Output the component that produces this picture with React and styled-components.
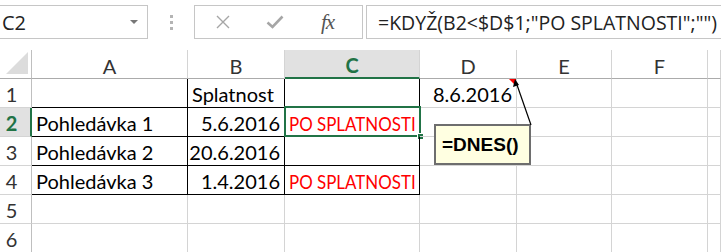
import React from "react";
import styled, { createGlobalStyle } from "styled-components";

const Global = createGlobalStyle`
  html, body { margin: 0; padding: 0; background: #fff; }
  * { box-sizing: border-box; }
`;

const GREEN = "#217346";
const GRID = "#d4d4d4";
const CELL_FONT = `"Lato", "Liberation Sans", sans-serif`;
const UI_FONT = `"Open Sans", "Noto Sans", sans-serif`;

const Page = styled.div`
  position: relative;
  width: 721px;
  height: 252px;
  overflow: hidden;
  background: #fff;
`;

const FormulaBar = styled.div`
  display: flex;
  align-items: stretch;
  height: 34px;
  margin-top: 5px;
`;

const NameBox = styled.div`
  width: 148px;
  border: 1px solid #c6c6c6;
  border-left: none;
  display: flex;
  align-items: center;
  justify-content: space-between;
  padding: 0 9px 0 2px;
  font-family: ${UI_FONT};
  font-size: 20px;
  color: #222;
`;

const DropArrow = styled.span`
  width: 0;
  height: 0;
  border-left: 4px solid transparent;
  border-right: 4px solid transparent;
  border-top: 4px solid #777;
`;

const Dots = styled.div`
  width: 46px;
  display: flex;
  flex-direction: column;
  align-items: center;
  justify-content: center;
  gap: 3px;
  span {
    width: 3px;
    height: 3px;
    background: #b4b4b4;
  }
`;

const IconBox = styled.div`
  width: 169px;
  border: 1px solid #c6c6c6;
  display: flex;
  align-items: center;
  padding-left: 20px;
  gap: 35px;
`;

const Fx = styled.span`
  margin-left: 2px;
  font-family: "Liberation Serif", serif;
  font-style: italic;
  font-size: 21px;
  color: #555;
  letter-spacing: -1px;
`;

const FormulaInput = styled.div`
  flex: 1;
  margin-left: 3px;
  border: 1px solid #c6c6c6;
  border-right: none;
  display: flex;
  align-items: center;
  padding-left: 11px;
  font-family: ${UI_FONT};
  font-size: 19.5px;
  color: #222;
  white-space: nowrap;
  overflow: hidden;
`;

const Sheet = styled.div`
  margin-top: 11px;
  display: grid;
  grid-template-columns: 32px 156px 97px 135px 97px 95px 96px 13px;
  grid-auto-rows: 29px;
`;

const Corner = styled.div`
  border-right: 1px solid #bfbfbf;
  border-bottom: 1px solid #ababab;
  display: flex;
  align-items: flex-end;
  justify-content: flex-end;
  padding: 0 3px 4px 0;
`;

const ColHeader = styled.div`
  border-right: 1px solid ${GRID};
  border-bottom: ${(p) => (p.$active ? `2px solid ${GREEN}` : "1px solid #ababab")};
  background: ${(p) => (p.$active ? "#e1e1e1" : "#fff")};
  color: ${(p) => (p.$active ? GREEN : "#333")};
  font-weight: ${(p) => (p.$active ? 700 : 400)};
  font-family: ${CELL_FONT};
  font-size: 20px;
  display: flex;
  align-items: center;
  justify-content: center;
  padding-top: 3px;
`;

const RowHeader = styled.div`
  border-right: ${(p) => (p.$active ? `2px solid ${GREEN}` : "1px solid #bfbfbf")};
  border-bottom: 1px solid ${GRID};
  background: ${(p) => (p.$active ? "#e1e1e1" : "#fff")};
  color: ${(p) => (p.$active ? GREEN : "#333")};
  font-weight: ${(p) => (p.$active ? 700 : 400)};
  font-family: ${CELL_FONT};
  font-size: 20px;
  display: flex;
  align-items: center;
  justify-content: center;
  padding: 2px ${(p) => (p.$active ? 7 : 8)}px 0 0;
`;

const Cell = styled.div`
  position: relative;
  border-right: 1px solid ${(p) => (p.$boxR ? "#000" : GRID)};
  border-bottom: 1px solid ${(p) => (p.$boxB ? "#000" : GRID)};
  display: flex;
  align-items: center;
  justify-content: ${(p) => (p.$right ? "flex-end" : "flex-start")};
  padding: 2px 4px 0 4px;
  font-family: ${CELL_FONT};
  font-size: 20px;
  color: ${(p) => (p.$red ? "#ff0000" : "#000")};
  white-space: nowrap;
`;

const Narrow = styled.span`
  display: inline-block;
  font-size: 19px;
  transform-origin: left center;
  transform: scaleX(0.89);
`;

const Selection = styled.div`
  position: absolute;
  left: -1px;
  top: -2px;
  right: -2px;
  bottom: -1px;
  border: 2px solid ${GREEN};
  pointer-events: none;
`;

const Handle = styled.div`
  position: absolute;
  right: -5px;
  bottom: -5px;
  width: 7px;
  height: 7px;
  background: ${GREEN};
  border: 1px solid #fff;
`;

const CommentMark = styled.div`
  position: absolute;
  top: 0;
  right: 0;
  width: 0;
  height: 0;
  border-top: 7px solid #ff0000;
  border-left: 7px solid transparent;
`;

const Comment = styled.div`
  position: absolute;
  left: 434px;
  top: 124px;
  width: 97px;
  height: 41px;
  background: #ffffe1;
  border: 2px solid #6e6e6e;
  display: flex;
  align-items: center;
  padding-left: 6px;
  font-family: "Liberation Sans", Arial, sans-serif;
  font-weight: 700;
  font-size: 19px;
  color: #000;
`;

const Leader = styled.svg`
  position: absolute;
  left: 505px;
  top: 76px;
  overflow: visible;
`;

const XIcon = () => (
  <svg width="16" height="16" viewBox="0 0 16 16">
    <path d="M2 2 L14 14 M14 2 L2 14" stroke="#a6a6a6" strokeWidth="1.4" fill="none" />
  </svg>
);

const CheckIcon = () => (
  <svg width="18" height="16" viewBox="0 0 18 16">
    <path d="M1.5 8.5 L6.5 13 L16.5 2.5" stroke="#a6a6a6" strokeWidth="2.6" fill="none" />
  </svg>
);

const CornerTri = () => (
  <svg width="22" height="22" viewBox="0 0 22 22">
    <polygon points="22,0 22,22 0,22" fill="#dcdcdc" />
  </svg>
);

const cols = ["A", "B", "C", "D", "E", "F", ""];

const rows = [
  [{}, { t: "Splatnost" }, {}, { t: "8.6.2016", right: true, mark: true }],
  [{ t: "Pohledávka 1" }, { t: "5.6.2016", right: true }, { t: "PO SPLATNOSTI", red: true, sel: true }],
  [{ t: "Pohledávka 2" }, { t: "20.6.2016", right: true }, {}],
  [{ t: "Pohledávka 3" }, { t: "1.4.2016", right: true }, { t: "PO SPLATNOSTI", red: true }],
  [],
  [],
];

export default function App() {
  return (
    <Page>
      <Global />
      <FormulaBar>
        <NameBox>
          C2
          <DropArrow />
        </NameBox>
        <Dots>
          <span />
          <span />
          <span />
        </Dots>
        <IconBox>
          <XIcon />
          <CheckIcon />
          <Fx>fx</Fx>
        </IconBox>
        <FormulaInput>=KDYŽ(B2&lt;$D$1;"PO SPLATNOSTI";"")</FormulaInput>
      </FormulaBar>
      <Sheet>
        <Corner>
          <CornerTri />
        </Corner>
        {cols.map((c, i) => (
          <ColHeader key={i} $active={c === "C"}>
            {c}
          </ColHeader>
        ))}
        {rows.map((r, ri) => (
          <React.Fragment key={ri}>
            <RowHeader $active={ri === 1}>{ri + 1}</RowHeader>
            {cols.map((_, ci) => {
              const d = r[ci] || {};
              const boxed = ri <= 3 && ci <= 2;
              return (
                <Cell key={ci} $boxR={boxed} $boxB={boxed} $right={d.right} $red={d.red}>
                  {d.red ? <Narrow>{d.t}</Narrow> : d.t}
                  {d.mark && <CommentMark />}
                  {d.sel && (
                    <Selection>
                      <Handle />
                    </Selection>
                  )}
                </Cell>
              );
            })}
          </React.Fragment>
        ))}
      </Sheet>
      <Comment>=DNES()</Comment>
      <Leader width="30" height="52">
        <path d="M26 49 L11 6" stroke="#000" strokeWidth="1.2" fill="none" />
        <polygon points="10,3 8,11 14,9" fill="#000" />
      </Leader>
    </Page>
  );
}
